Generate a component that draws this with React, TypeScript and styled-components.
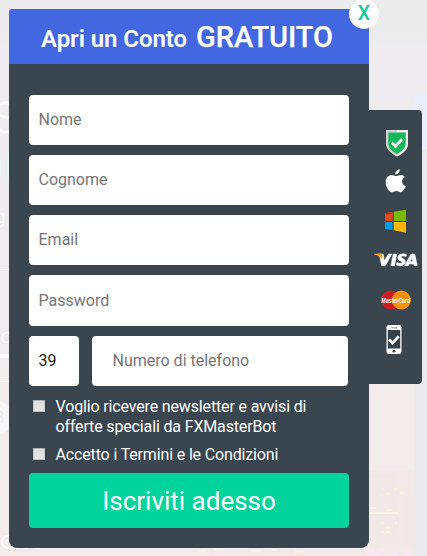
import React from 'react';
import styled, { createGlobalStyle } from 'styled-components';

const Global = createGlobalStyle`
  * { box-sizing: border-box; }
  html, body { margin: 0; padding: 0; }
  body { font-family: Roboto, "Liberation Sans", sans-serif; overflow: hidden; }
`;

const Page = styled.div`
  position: relative;
  width: 427px;
  height: 556px;
  overflow: hidden;
  padding: 9px 0 0 9px;
  background: linear-gradient(180deg, #ebebeb 0, #ebebeb 28px, #eeecef 60px, #efecf0 220px, #f2ecec 400px, #f3eceb 556px);
`;

const Backdrop = styled.div`
  position: absolute;
  inset: 0;
  color: #fafafa;
`;

const Ghost = styled.span<{ $x: number; $y: number; $size: number; $color?: string; $weight?: number }>`
  position: absolute;
  left: ${p => p.$x}px;
  top: ${p => p.$y}px;
  font-size: ${p => p.$size}px;
  line-height: 1;
  font-weight: ${p => p.$weight || 300};
  white-space: nowrap;
  color: ${p => p.$color || 'inherit'};
`;

const Rule = styled.div<{ $y: number; $h: number; $w: number }>`
  position: absolute;
  left: 0;
  top: ${p => p.$y}px;
  width: ${p => p.$w}px;
  height: ${p => p.$h}px;
  background: #fafafa;
`;

const Bubble = styled.div`
  position: absolute;
  left: -21px;
  top: 401px;
  width: 34px;
  height: 34px;
  border-radius: 50%;
  background: #f7f6f6;
`;

const Strip = styled.div`
  position: absolute;
  left: 414px;
  top: 94px;
  width: 13px;
  height: 462px;
  background: linear-gradient(180deg, #ebeefb 0 55px, #eae9ec 55px);
  border-radius: 4px 0 0 0;
`;

const Skyline = styled.svg`
  position: absolute;
  left: 60px;
  top: 470px;
`;

const Dialog = styled.div`
  position: relative;
  display: flex;
  align-items: flex-start;
`;

const Card = styled.section`
  width: 360px;
  height: 539px;
  border-radius: 4px 0 8px 8px;
  overflow: hidden;
  background: rgba(51, 64, 73, 0.97);
`;

const Header = styled.header`
  height: 55px;
  padding: 1px 0 0 32px;
  display: flex;
  align-items: baseline;
  gap: 9px;
  line-height: 55px;
  background: #4267e1;
  color: #fff;
  font-size: 24px;
  font-weight: 600;
  letter-spacing: -0.06px;
  white-space: nowrap;
`;

const Strong = styled.span`
  font-size: 29px;
  font-weight: 500;
  letter-spacing: -0.05px;
  -webkit-text-stroke: 0.25px #fff;
`;

const Form = styled.form`
  padding: 31px 20px 0;
`;

const Field = styled.input<{ $tall?: boolean }>`
  display: block;
  width: 100%;
  height: ${p => (p.$tall ? 51 : 50)}px;
  margin: 0 0 10px;
  padding: 0 10px ${p => (p.$tall ? 0 : 2)}px 9.5px;
  border: 0;
  border-radius: 4px;
  background: #fff;
  color: #222;
  font: 400 16px Roboto, sans-serif;
  outline: none;
  &::placeholder { color: #757575; opacity: 1; }
`;

const PhoneRow = styled.div`
  display: flex;
  gap: 13px;
  height: 50px;
  margin-bottom: 11px;
`;

const Prefix = styled(Field)`
  width: 50px;
`;

const Phone = styled(Field)`
  width: 256px;
  padding-left: 20.5px;
`;

const Option = styled.label`
  display: flex;
  align-items: flex-start;
  gap: 10.5px;
  padding-left: 4px;
  margin-bottom: 8px;
  color: #fff;
  font-size: 16px;
  line-height: 20px;
  letter-spacing: -0.15px;
  white-space: nowrap;
`;

const Check = styled.input`
  appearance: none;
  flex: none;
  width: 12px;
  height: 12px;
  margin: 3px 0 0;
  border: 1px solid #c4c4c4;
  border-top-color: #b5b5b5;
  border-radius: 1px;
  background: linear-gradient(#dcdcdc, #e6e6e6);
`;

const Submit = styled.button`
  display: block;
  width: 320px;
  height: 55px;
  margin-top: 8px;
  padding: 0;
  border: 0;
  border-radius: 4px;
  background: #00d49c;
  color: #fff;
  font: 400 26px Roboto, sans-serif;
`;

const Close = styled.button`
  position: absolute;
  left: 340px;
  top: -10px;
  width: 30px;
  height: 30px;
  padding: 0;
  border: 0;
  border-radius: 50%;
  background: #fff;
  color: #12c99a;
  font: 500 19.5px/28px Roboto, sans-serif;
`;

const Badges = styled.aside`
  width: 53px;
  height: 274px;
  margin-top: 101px;
  padding: 19px 0 0 4px;
  display: flex;
  flex-direction: column;
  border-radius: 0 4px 4px 0;
  background: rgba(51, 64, 73, 0.97);
`;

const Slot = styled.div<{ $h: number; $x: number }>`
  height: ${p => p.$h}px;
  padding-left: ${p => p.$x}px;
  svg { display: block; }
`;

const Shield = () => (
  <svg width="24" height="28" viewBox="0 0 24 28">
    <path d="M1 1h22v13c0 6-4 10-11 13.500C5 24 1 20 1 14z" fill="#d5d2d3" />
    <path d="M12 1h11v13c0 6-4 10-11 13.500z" fill="#f0eeee" />
    <path d="M3.300 3.500h17.400V14c0 4.500-3 8-8.700 11C6.300 22 3.300 18.500 3.300 14z" fill="#12b858" />
    <path d="M7 13.500l3.500 3.700 6.500-7" fill="none" stroke="#fff" strokeWidth="3" />
  </svg>
);

const Apple = () => (
  <svg width="22" height="24" viewBox="0 0 22 24">
    <path d="M14.800.2c.2 2.700-2 5.300-4.500 5.200C10 3 12.200.5 14.800.2zM19.800 8c-4 2.400-3.400 7.500.9 9.300-.8 2.300-2.700 5.800-5 5.900-1.800 0-2.300-1.100-4.300-1.100s-2.700 1.100-4.400 1.100C4 23.300.7 17.900.7 13 .7 8.500 3.700 6 6.600 6c2 0 3.200 1.100 4.600 1.100C12.500 7.100 13.700 6 16 6c1.500 0 3 .8 3.800 2z" fill="#fff" />
  </svg>
);

const Windows = () => (
  <svg width="22" height="24" viewBox="0 0 22 24">
    <path d="M0 4l7.600-1.100v9H0z" fill="#e64a0e" />
    <path d="M.7 4.300l6-.9v1.200l-6 .8z" fill="#a72c25" />
    <path d="M8.700 2.700L21 .8v11.100H8.700z" fill="#7bb800" />
    <path d="M0 12.900h7.600V21L0 20z" fill="#009ce8" />
    <path d="M8.700 12.900H21v10.800L8.700 21.300z" fill="#fbb506" />
  </svg>
);

const Visa = () => (
  <svg width="46" height="16" viewBox="0 0 46 16">
    <g fill="#fff" stroke="#fff" strokeWidth=".5">
      <path d="M4.500 2h5.700l1.300 7L15.200 2h3.600L12.400 13.700H8.700L6.800 5z" />
      <path d="M20.200 2h3.600l-2.300 11.700h-3.600z" />
      <path d="M33 4.600c-2-.9-4.800-.8-4.800.4 0 1.400 4.700 1.600 4.200 4.900-.4 4-6 4.500-9.200 3.200l.6-2.500c2.400 1.100 5.100.9 5.200-.3.100-1.300-4.600-1.700-4.200-5 .4-3.500 5.400-4.200 8.700-2.900z" />
      <path d="M38 2h3.800l2.500 11.700H41l-.4-1.700h-4.500l-.9 1.700h-3.600zM39 5.800l-1.700 3.700h2.400z" fillRule="evenodd" />
    </g>
    <path d="M1 1.800h6.600C9 1.800 9.600 3 9.300 8 7.800 4.700 5 3.200 1 2.500z" fill="#f9a51a" />
  </svg>
);

const CardText = styled.text`
  font: italic 700 7.6px "Liberation Sans", sans-serif;
  fill: #fff;
`;

const Mastercard = () => (
  <svg width="30" height="20" viewBox="0 0 30 20">
    <circle cx="9.700" cy="10" r="9.500" fill="#cc1d22" />
    <circle cx="20.300" cy="10" r="9.500" fill="#ff9005" />
    <path d="M15 3c-5.200 3.500-5.200 10.500 0 14" fill="none" stroke="#f16b18" strokeWidth="1" />
    <CardText x=".3" y="12.600" textLength="29" lengthAdjust="spacingAndGlyphs">MasterCard</CardText>
  </svg>
);

const Mobile = () => (
  <svg width="16" height="29" viewBox="0 0 16 29">
    <rect x=".5" width="15" height="29" rx="2.300" fill="#fff" />
    <rect x="1.800" y="5" width="12.400" height="18.500" fill="#35414b" />
    <path d="M5 2.800h6" stroke="#8c9298" strokeWidth="1" />
    <circle cx="8" cy="26.200" r="1.400" fill="#35414b" />
    <path d="M3 14.600l3.500 3.400 6.200-6.600" fill="none" stroke="#fff" strokeWidth="2.800" />
  </svg>
);

const litWindows = ['M321 19h3', 'M334 19h3', 'M326 24h4M340 23h4', 'M326 40h7', 'M321 53h3M335 53h2', 'M326 58h4', 'M321 62h3M326 62h4'];

export default function App() {
  return (
    <>
      <Global />
      <Page>
        <Backdrop aria-hidden="true">
          <Ghost $x={-9} $y={83} $size={60}>scrivi</Ghost>
          <Ghost $x={-34} $y={134} $size={56} $color="#e2f7f1" $weight={500}>Gr</Ghost>
          <Ghost $x={-5} $y={208} $size={18}>g</Ghost>
          <Ghost $x={1} $y={326} $size={20}>ori broker</Ghost>
          <Ghost $x={0} $y={527} $size={26} $weight={400}>one »</Ghost>
          <Rule $y={269} $h={1} $w={110} />
          <Rule $y={354} $h={4} $w={90} />
          <Rule $y={381} $h={1} $w={90} />
          <Bubble />
          <Ghost $x={-5} $y={410} $size={16} $color="#eee9e9">8</Ghost>
          <Skyline width="354" height="86" viewBox="0 0 354 86">
            <path d="M309 0h45v86H150V79h159z" fill="#f4e8e8" opacity=".6" />
            <path d="M309 4h26v12h-17v62h-9zM318 16h20v54h-20zM342 27h12v51h-12z" fill="#f0e7e7" opacity=".7" />
            {litWindows.map(d => (
              <path key={d} d={d} stroke="#f7eedc" strokeWidth="2.500" />
            ))}
            <path d="M309 38h7M309 43h29" stroke="#fbf3ea" strokeWidth="2" />
            <path d="M304 79l10-2v9h-9zM318 77l8 2-5 7h-5zM332 77l7 1-2 8h-6zM344 79h6v7h-6z" fill="#f8e6f0" />
            <path d="M138 81h8M154 79h10M190 81h12M212 80h5M235 82h9" stroke="#faf0e2" strokeWidth="3" />
          </Skyline>
          <Strip />
        </Backdrop>
        <Dialog role="dialog">
          <Card>
            <Header>
              Apri un Conto <Strong>GRATUITO</Strong>
            </Header>
            <Form onSubmit={e => e.preventDefault()}>
              <Field placeholder="Nome" />
              <Field placeholder="Cognome" />
              <Field placeholder="Email" />
              <Field placeholder="Password" type="text" $tall />
              <PhoneRow>
                <Prefix defaultValue="39" />
                <Phone placeholder="Numero di telefono" />
              </PhoneRow>
              <Option>
                <Check type="checkbox" />
                <span>
                  Voglio ricevere newsletter e avvisi di
                  <br />
                  offerte speciali da FXMasterBot
                </span>
              </Option>
              <Option>
                <Check type="checkbox" />
                <span>Accetto i Termini e le Condizioni</span>
              </Option>
              <Submit>Iscriviti adesso</Submit>
            </Form>
          </Card>
          <Badges>
            <Slot $h={40} $x={12}><Shield /></Slot>
            <Slot $h={40} $x={12}><Apple /></Slot>
            <Slot $h={43} $x={12}><Windows /></Slot>
            <Slot $h={38} $x={0}><Visa /></Slot>
            <Slot $h={35} $x={8}><Mastercard /></Slot>
            <Slot $h={29} $x={13}><Mobile /></Slot>
          </Badges>
          <Close>X</Close>
        </Dialog>
      </Page>
    </>
  );
}
